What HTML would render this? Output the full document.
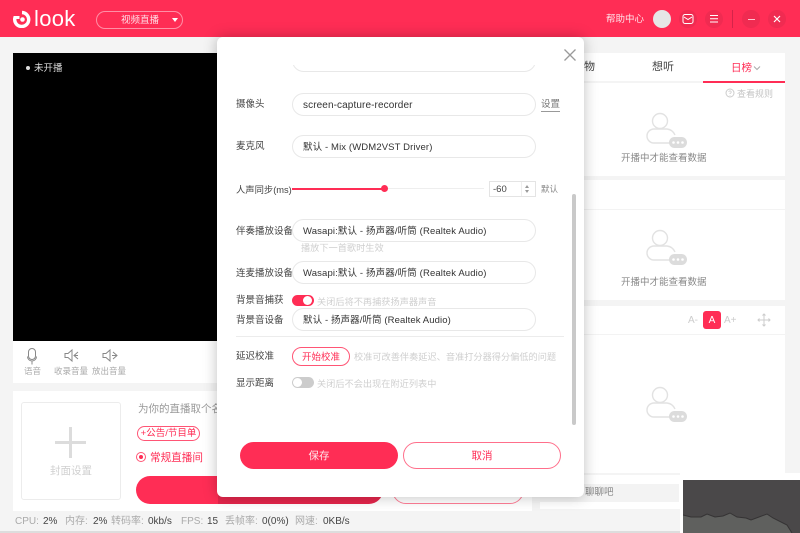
<!DOCTYPE html>
<html><head><meta charset="utf-8">
<style>
*{box-sizing:border-box;margin:0;padding:0}
html,body{width:800px;height:533px;overflow:hidden;background:#f4f4f4}
body{position:relative;font-family:"Liberation Sans","Noto Sans CJK SC",sans-serif;font-size:10px;color:#444}
.a{position:absolute;white-space:nowrap}
.w{position:absolute;background:#fff}
.sel{position:absolute;left:75px;width:244px;height:23px;border:1px solid #e8e8e8;border-radius:12px;line-height:23px;padding-left:10px;font-size:9.5px;color:#333;background:#fff;white-space:nowrap}
.lb{position:absolute;left:19px;font-size:9.5px;color:#444;white-space:nowrap;line-height:14px}
.hint{position:absolute;font-size:9.2px;color:#cfcfcf;white-space:nowrap;line-height:14px}
.circ{position:absolute;top:10px;width:18px;height:18px;border-radius:9px;background:#f02b51}
.gr{color:#aaa}
.st{top:515px;line-height:14px;font-size:10px}
</style></head><body>

<!-- header -->
<div class="w" style="left:0;top:0;width:800px;height:37px;background:#ff2d55"></div>
<svg class="a" style="left:12px;top:10px" width="22" height="18" viewBox="0 0 22 18"><path d="M10 2.500a7 7 0 1 1-7 5" fill="none" stroke="#fff" stroke-width="3.400"/><circle cx="10.500" cy="9.500" r="2.300" fill="#fff"/><path d="M1.500 7.500h6" stroke="#fff" stroke-width="3"/></svg>
<div class="a" style="left:34px;top:5px;font-size:22px;line-height:27px;color:#fff;letter-spacing:.3px">look</div>
<div class="a" style="left:96px;top:11px;width:87px;height:18px;border:1px solid #ff8fa6;border-radius:9px;color:#ffdfe6;font-size:9.500px;line-height:18px;padding-left:24px">视频直播</div>
<div class="a" style="left:172px;top:18px;border-left:3.500px solid transparent;border-right:3.500px solid transparent;border-top:4px solid #fff"></div>
<div class="a" style="left:606px;top:13px;color:#ffe3e9;font-size:9.500px;line-height:14px">帮助中心</div>
<div class="a" style="left:653px;top:10px;width:18px;height:18px;border-radius:9px;background:#e6e6e6"></div>
<div class="circ" style="left:679px"></div>
<svg class="a" style="left:681px;top:12px" width="14" height="14" viewBox="0 0 14 14"><rect x="2" y="2.500" width="10" height="9" rx="2" fill="none" stroke="#fff"/><path d="M3 5l4 2.500L11 5" fill="none" stroke="#fff"/></svg>
<div class="circ" style="left:705px"></div>
<svg class="a" style="left:708px;top:13px" width="12" height="12" viewBox="0 0 12 12"><path d="M2 2.500h8M2 5.800h8M2 9h8" stroke="#fff" stroke-width="1"/></svg>
<div class="a" style="left:732px;top:10px;width:1px;height:18px;background:#d4244a"></div>
<div class="circ" style="left:742px"></div>
<div class="a" style="left:748px;top:18.500px;width:7px;height:1px;background:#ffc5d1"></div>
<div class="circ" style="left:768px"></div>
<svg class="a" style="left:771px;top:13px" width="12" height="12" viewBox="0 0 12 12"><path d="M3 3l6 6M9 3l-6 6" stroke="#fff" stroke-width="1.200"/></svg>

<!-- video -->
<div class="a" style="left:13px;top:53px;width:205px;height:288px;background:#000"></div>
<div class="a" style="left:26px;top:66px;width:4px;height:4px;border-radius:2px;background:#ddd"></div>
<div class="a" style="left:34px;top:62px;color:#ddd;font-size:9.500px;line-height:14px">未开播</div>

<!-- toolbar -->
<div class="w" style="left:13px;top:341px;width:519px;height:42px"></div>
<svg class="a" style="left:24px;top:347px" width="16" height="19" viewBox="0 0 16 19" fill="none" stroke="#888"><rect x="4.500" y="1.500" width="7" height="11" rx="3.500"/><path d="M3.500 9.500a4.500 4.500 0 0 0 9 0M8 14v3.500"/></svg>
<svg class="a" style="left:64px;top:348px" width="15" height="15" viewBox="0 0 15 15" fill="none" stroke="#888"><path d="M1 5.500h3l4-3.500v11l-4-3.500H1zM14 4l-4 3.500 4 3.500M10 7.500h4"/></svg>
<svg class="a" style="left:102px;top:348px" width="16" height="15" viewBox="0 0 16 15" fill="none" stroke="#888"><path d="M1 5.500h3l4-3.500v11l-4-3.500H1zM11 4l4 3.500-4 3.500M10 7.500h5"/></svg>
<div class="a gr" style="left:24px;top:365px;font-size:8.500px;line-height:12px">语音</div>
<div class="a gr" style="left:54px;top:365px;font-size:8.500px;line-height:12px">收录音量</div>
<div class="a gr" style="left:92px;top:365px;font-size:8.500px;line-height:12px">放出音量</div>

<!-- left lower panel -->
<div class="w" style="left:13px;top:391px;width:519px;height:120px"></div>
<div class="a" style="left:21px;top:402px;width:100px;height:98px;border:1px solid #ececec;border-radius:3px;background:#fff"></div>
<div class="a" style="left:69px;top:427px;width:3px;height:31px;background:#dcdcdc"></div>
<div class="a" style="left:55px;top:441px;width:31px;height:3px;background:#dcdcdc"></div>
<div class="a" style="left:50px;top:464px;color:#d0d0d0;font-size:10.500px;line-height:15px">封面设置</div>
<div class="a" style="left:138px;top:402px;color:#999;font-size:10.500px;line-height:15px">为你的直播取个名字</div>
<div class="a" style="left:137px;top:426px;width:63px;height:15px;border:1px solid #ff5575;border-radius:8px;color:#ff2d55;font-size:9.500px;line-height:14px;text-align:center">+公告/节目单</div>
<div class="a" style="left:136px;top:452px;width:10px;height:10px;border:1px solid #ff5575;border-radius:5px"></div>
<div class="a" style="left:139px;top:455px;width:4px;height:4px;border-radius:2px;background:#ff2d55"></div>
<div class="a" style="left:150px;top:451px;color:#ff2d55;font-size:10.600px;line-height:15px">常规直播间</div>
<div class="a" style="left:136px;top:476px;width:100px;height:28px;border-radius:14px 0 0 14px;background:#ff2d55"></div>
<div class="a" style="left:218px;top:476px;width:165px;height:28px;border-radius:0 14px 14px 0;background:#e4264c"></div>
<div class="a" style="left:392px;top:476px;width:132px;height:28px;border:1px solid #ff7d96;border-radius:14px;background:#fff"></div>

<!-- status bar -->
<div class="a" style="left:0;top:531px;width:800px;height:2px;background:#ddd"></div>
<div class="a gr st" style="left:15px">CPU:</div>
<div class="a st" style="left:43px">2%</div>
<div class="a gr st" style="left:65px">内存:</div>
<div class="a st" style="left:93px">2%</div>
<div class="a gr st" style="left:111px">转码率:</div>
<div class="a st" style="left:148px">0kb/s</div>
<div class="a gr st" style="left:181px">FPS:</div>
<div class="a st" style="left:207px">15</div>
<div class="a gr st" style="left:225px">丢帧率:</div>
<div class="a st" style="left:262px">0(0%)</div>
<div class="a gr st" style="left:295px">网速:</div>
<div class="a st" style="left:323px">0KB/s</div>

<!-- right panels -->
<div class="w" style="left:540px;top:53px;width:245px;height:123px"></div>
<div class="a" style="left:540px;top:81px;width:245px;height:2px;background:#f4f4f4"></div>
<div class="a" style="left:703px;top:81px;width:82px;height:2px;background:#ff2d55"></div>
<div class="a" style="left:584px;top:60px;color:#444;font-size:11px;line-height:15px">物</div>
<div class="a" style="left:652px;top:60px;color:#444;font-size:11px;line-height:15px">想听</div>
<div class="a" style="left:731px;top:61px;color:#ff2d55;font-size:10.500px;line-height:15px">日榜</div>
<svg class="a" style="left:753px;top:65px" width="8" height="6" viewBox="0 0 8 6"><path d="M1 1.500l3 3 3-3" fill="none" stroke="#aaa"/></svg>
<svg class="a" style="left:725px;top:88px" width="10" height="10" viewBox="0 0 10 10"><circle cx="5" cy="5" r="4" fill="none" stroke="#ccc"/><path d="M3.800 4a1.200 1.200 0 1 1 1.200 1.300V6M5 7v.6" fill="none" stroke="#ccc" stroke-width=".8"/></svg>
<div class="a" style="left:737px;top:88px;color:#c4c4c4;font-size:9px;line-height:13px">查看规则</div>

<div class="w" style="left:540px;top:180px;width:245px;height:120px"></div>
<div class="a" style="left:540px;top:209px;width:245px;height:1px;background:#f3f3f3"></div>
<div class="w" style="left:540px;top:306px;width:245px;height:167px"></div>
<div class="a" style="left:540px;top:334px;width:245px;height:1px;background:#f3f3f3"></div>

<svg class="a" style="left:645px;top:112px" width="42" height="42" viewBox="0 0 42 42" fill="none" stroke="#e2e2e2" stroke-width="1.400"><circle cx="15" cy="9" r="7.500"/><path d="M25 31H9a7 7 0 0 1 0-14h13a10 10 0 0 1 8 6"/><rect x="24" y="25" width="18" height="11" rx="5.500" fill="#dcdcdc" stroke="none"/><circle cx="28.500" cy="30.500" r="1.300" fill="#fff" stroke="none"/><circle cx="33" cy="30.500" r="1.300" fill="#fff" stroke="none"/><circle cx="37.500" cy="30.500" r="1.300" fill="#fff" stroke="none"/></svg>
<div class="a" style="left:621px;top:152px;color:#888;font-size:9.500px;line-height:14px">开播中才能查看数据</div>
<svg class="a" style="left:645px;top:229px" width="42" height="42" viewBox="0 0 42 42" fill="none" stroke="#e2e2e2" stroke-width="1.400"><circle cx="15" cy="9" r="7.500"/><path d="M25 31H9a7 7 0 0 1 0-14h13a10 10 0 0 1 8 6"/><rect x="24" y="25" width="18" height="11" rx="5.500" fill="#dcdcdc" stroke="none"/><circle cx="28.500" cy="30.500" r="1.300" fill="#fff" stroke="none"/><circle cx="33" cy="30.500" r="1.300" fill="#fff" stroke="none"/><circle cx="37.500" cy="30.500" r="1.300" fill="#fff" stroke="none"/></svg>
<div class="a" style="left:621px;top:276px;color:#888;font-size:9.500px;line-height:14px">开播中才能查看数据</div>
<svg class="a" style="left:645px;top:386px" width="42" height="42" viewBox="0 0 42 42" fill="none" stroke="#e2e2e2" stroke-width="1.400"><circle cx="15" cy="9" r="7.500"/><path d="M25 31H9a7 7 0 0 1 0-14h13a10 10 0 0 1 8 6"/><rect x="24" y="25" width="18" height="11" rx="5.500" fill="#dcdcdc" stroke="none"/><circle cx="28.500" cy="30.500" r="1.300" fill="#fff" stroke="none"/><circle cx="33" cy="30.500" r="1.300" fill="#fff" stroke="none"/><circle cx="37.500" cy="30.500" r="1.300" fill="#fff" stroke="none"/></svg>

<div class="a" style="left:688px;top:314px;color:#ccc;font-size:10px;line-height:14px">A-</div>
<div class="a" style="left:703px;top:311px;width:18px;height:18px;border-radius:3px;background:#ff2d55;color:#fff;font-size:10px;line-height:19px;text-align:center">A</div>
<div class="a" style="left:724px;top:314px;color:#ccc;font-size:10px;line-height:14px">A+</div>
<svg class="a" style="left:757px;top:313px" width="14" height="14" viewBox="0 0 14 14" fill="none" stroke="#ccc"><path d="M7 1v12M1 7h12M5.500 2.500L7 1l1.500 1.500M5.500 11.500L7 13l1.500-1.500M2.500 5.500L1 7l1.500 1.500M11.500 5.500L13 7l-1.500 1.500"/></svg>

<!-- chat input area -->
<div class="w" style="left:540px;top:475px;width:140px;height:34px"></div>
<div class="a" style="left:540px;top:484px;width:139px;height:18px;background:#f3f3f3"></div>
<div class="a" style="left:585px;top:486px;color:#888;font-size:9.500px;line-height:14px">聊聊吧</div>

<!-- thumbnail -->
<div class="w" style="left:680px;top:473px;width:120px;height:60px"></div>
<svg class="a" style="left:683px;top:480px" width="117" height="53" viewBox="0 0 117 53"><rect width="117" height="53" fill="#4a4849"/><path d="M0 35L8 37H18L24 34L32 37L40 36L47 33L54 37L63 38L68 40L76 37L84 34L90 38L104 45L109 53H0z" fill="#5f605e"/><path d="M0 35L8 37H18L24 34L32 37L40 36L47 33L54 37L63 38L68 40L76 37L84 34L90 38L104 45L109 53" fill="none" stroke="#353334"/></svg>

<!-- modal -->
<div class="a" style="left:217px;top:37px;width:367px;height:460px;border-radius:6px;background:#fff;box-shadow:0 0 14px rgba(0,0,0,.25);overflow:hidden">
  <div class="sel" style="top:12px"></div>
  <div class="w" style="left:60px;top:0;width:275px;height:28px"></div>
  <svg class="a" style="left:345px;top:10px" width="16" height="16" viewBox="0 0 16 16"><path d="M2.500 2.500l11 11M13.500 2.500l-11 11" stroke="#9a9a9a" stroke-width="1.300"/></svg>
  <div class="lb" style="top:61px">摄像头</div>
  <div class="sel" style="top:56px;font-size:10px;letter-spacing:.1px">screen-capture-recorder</div>
  <div class="a" style="left:324px;top:61px;font-size:9.500px;line-height:13px;color:#777;border-bottom:1px solid #999">设置</div>
  <div class="lb" style="top:103px">麦克风</div>
  <div class="sel" style="top:98px;letter-spacing:.12px">默认 - Mix (WDM2VST Driver)</div>
  <div class="lb" style="top:146px;font-size:9.300px">人声同步(ms)</div>
  <div class="a" style="left:75px;top:151px;width:192px;height:1px;background:#eee"></div>
  <div class="a" style="left:75px;top:151px;width:92px;height:1.500px;background:#ff2d55"></div>
  <div class="a" style="left:163.500px;top:147.500px;width:7.500px;height:7.500px;border-radius:4px;background:#ff2d55"></div>
  <div class="a" style="left:272px;top:144px;width:47px;height:16px;border:1px solid #e4e4e4;font-size:9.500px;line-height:15px;padding-left:3px;color:#444">-60</div>
  <div class="a" style="left:304px;top:145px;width:1px;height:14px;background:#eee"></div>
  <div class="a" style="left:308px;top:148px;border-left:2px solid transparent;border-right:2px solid transparent;border-bottom:3px solid #999"></div>
  <div class="a" style="left:308px;top:153px;border-left:2px solid transparent;border-right:2px solid transparent;border-top:3px solid #999"></div>
  <div class="a" style="left:324px;top:145px;font-size:8.500px;line-height:14px;color:#888">默认</div>
  <div class="a" style="left:355px;top:157px;width:4px;height:231px;border-radius:2px;background:#c9c9c9"></div>

  <div class="lb" style="top:188px">伴奏播放设备</div>
  <div class="sel" style="top:182px;letter-spacing:.13px">Wasapi:默认 - 扬声器/听筒 (Realtek Audio)</div>
  <div class="hint" style="left:84px;top:204px">播放下一首歌时生效</div>
  <div class="lb" style="top:230px">连麦播放设备</div>
  <div class="sel" style="top:224px;letter-spacing:.13px">Wasapi:默认 - 扬声器/听筒 (Realtek Audio)</div>
  <div class="lb" style="top:257px">背景音捕获</div>
  <div class="a" style="left:75px;top:258px;width:22px;height:11px;border-radius:6px;background:#ff2d55"></div>
  <div class="a" style="left:86px;top:259px;width:9px;height:9px;border-radius:5px;background:#fff"></div>
  <div class="hint" style="left:100px;top:258px">关闭后将不再捕获扬声器声音</div>
  <div class="lb" style="top:277px">背景音设备</div>
  <div class="sel" style="top:271px;letter-spacing:.1px">默认 - 扬声器/听筒 (Realtek Audio)</div>
  <div class="a" style="left:19px;top:299px;width:328px;height:1px;background:#ececec"></div>
  <div class="lb" style="top:313px">延迟校准</div>
  <div class="a" style="left:75px;top:310px;width:58px;height:19px;border:1px solid #ff5575;border-radius:10px;color:#ff2d55;font-size:9.500px;line-height:19px;text-align:center">开始校准</div>
  <div class="hint" style="left:137px;top:313px">校准可改善伴奏延迟、音准打分器得分偏低的问题</div>
  <div class="lb" style="top:340px">显示距离</div>
  <div class="a" style="left:75px;top:340px;width:22px;height:11px;border-radius:6px;background:#ccc"></div>
  <div class="a" style="left:76px;top:341px;width:9px;height:9px;border-radius:5px;background:#fff"></div>
  <div class="hint" style="left:100px;top:340px">关闭后不会出现在附近列表中</div>

  <div class="a" style="left:23px;top:405px;width:158px;height:27px;border-radius:14px;background:#ff2d55;color:#ffe6eb;font-size:10.500px;line-height:29px;text-align:center">保存</div>
  <div class="a" style="left:186px;top:405px;width:158px;height:27px;border:1px solid #ff6f8b;border-radius:14px;color:#ff2d55;font-size:10.500px;line-height:27px;text-align:center;background:#fff">取消</div>
</div>
</body></html>
